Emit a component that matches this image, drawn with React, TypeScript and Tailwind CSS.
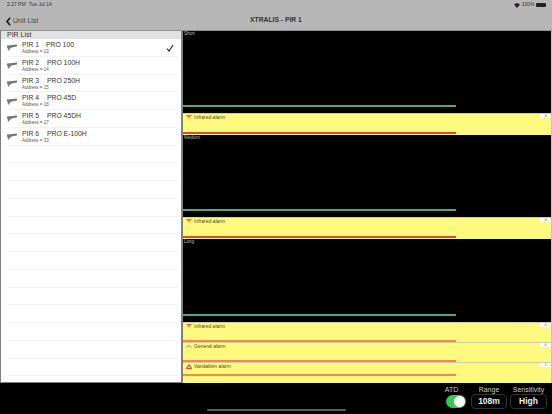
const font = { fontFamily: '"Liberation Sans", Arial, sans-serif' };

function Sensor() {
  return (
    <svg width="10" height="7" viewBox="0 0 10 7" className="shrink-0">
      <path d="M0 1.6 L10 0.6 V2.6 L4.4 3.4 L4 4.4 L2.6 4.6 L2.2 6.4 H0.8 L0.8 3.8 H0 Z" fill="#777" />
    </svg>
  );
}

const pirs = [
  ["PIR 1", "PRO 100", "Address = 13", "w-[24px]"],
  ["PIR 2", "PRO 100H", "Address = 14", "w-[25px]"],
  ["PIR 3", "PRO 250H", "Address = 15", "w-[25px]"],
  ["PIR 4", "PRO 45D", "Address = 16", "w-[25px]"],
  ["PIR 5", "PRO 45DH", "Address = 17", "w-[25px]"],
  ["PIR 6", "PRO E-100H", "Address = 33", "w-[25px]"],
];

function Row({ item, checked }: { item?: string[]; checked?: boolean }) {
  return (
    <div className="h-[17.75px] shrink-0 flex flex-col">
      <div className="flex-1 flex items-center pl-[6px] pr-[6px]">
        {item && (
          <>
            <div className="w-[15px] mt-[1px]"><Sensor /></div>
            <div className="flex-1 flex flex-col mt-[1.5px]">
              <div className="flex text-[6.8px] leading-[8px] text-[#333]">
                <span className={item[3] === "w-[24px]" ? "w-[24px]" : "w-[25px]"}>{item[0]}</span>
                <span>{item[1]}</span>
              </div>
              <div className="text-[4.5px] leading-[6px] text-[#555]">{item[2]}</div>
            </div>
            {checked && (
              <svg width="8" height="8" viewBox="0 0 8 8" className="mr-[1px] mt-[2px]">
                <path d="M1 4.5 L3 7 L7 1" fill="none" stroke="#222" strokeWidth="1.1" />
              </svg>
            )}
          </>
        )}
      </div>
      <div className="h-px ml-[7px] mr-[3px] bg-[#f2f2f2]" />
    </div>
  );
}

function Chart({ label, h }: { label: string; h: string }) {
  return (
    <div className={`${h} bg-black relative`}>
      <div className="text-[4.5px] leading-[6px] text-[#bdbdbd] pl-[1px]">{label}</div>
      <div className="absolute left-0 w-[273px] bottom-[6.5px] h-[1.5px] bg-[#4fa58c]" />
    </div>
  );
}

function Ir() {
  return (
    <svg width="6" height="5" viewBox="0 0 6 5">
      <path d="M0 0 H6 L5 1.5 H4 L3 4.5 L2 1.5 H1 Z" fill="#e9743a" />
    </svg>
  );
}
function Gen() {
  return (
    <svg width="6" height="5" viewBox="0 0 6 5">
      <path d="M0.5 3 Q3 0 5.5 3" fill="none" stroke="#e9843a" strokeWidth="1" />
    </svg>
  );
}
function Van() {
  return (
    <svg width="6" height="5" viewBox="0 0 6 5">
      <path d="M3 0.5 L5.6 4.7 H0.4 Z" fill="none" stroke="#e2503a" strokeWidth="1.2" />
    </svg>
  );
}

function Alarm({ icon, label, val, h, line, color }: { icon: React.ReactNode; label: string; val: string; h: string; line: string; color: string }) {
  return (
    <div className={`${h} bg-[#fdf97e] border-t border-[#cfcda6] relative`}>
      <div className="flex items-center pl-[3px] h-[6px]">
        <div className="w-[8px]">{icon}</div>
        <span className="text-[5px] leading-[6px] text-[#4a4a2a]">{label}</span>
      </div>
      <div className="absolute right-0 top-0 w-[11px] h-[4px] bg-white text-[4px] leading-[4px] text-[#666] text-center">{val}</div>
      <div className={`absolute left-0 w-[273px] ${line} ${color}`} />
    </div>
  );
}

export default function App() {
  return (
    <div className="w-[552px] h-[414px] bg-black flex flex-col overflow-hidden" style={font}>
      <header className="h-[30px] shrink-0 bg-[#b7b7b7] flex flex-col">
        <div className="h-[10px] flex items-center justify-between pl-[7px] pr-[6px] text-[5px] text-[#333]">
          <div className="flex gap-[3px]"><span>2:27 PM</span><span>Tue Jul 14</span></div>
          <div className="flex items-center gap-[1.5px]">
            <svg width="6" height="5" viewBox="0 0 6 5"><path d="M0 1.5 Q3 -1 6 1.5 L3 5 Z" fill="#222" /></svg>
            <span>100%</span>
            <div className="w-[10px] h-[4px] bg-[#222] rounded-[1px]" />
          </div>
        </div>
        <div className="flex-1 relative flex items-center justify-center">
          <div className="absolute left-[6px] top-[6px] flex items-center gap-[2px] text-[7px] text-[#444]">
            <svg width="5" height="9" viewBox="0 0 5 9"><path d="M4.2 0.7 L1 4.5 L4.2 8.3" fill="none" stroke="#222" strokeWidth="1.7" /></svg>
            <span>Unit List</span>
          </div>
          <span className="text-[6.75px] font-bold text-[#333]">XTRALIS - PIR 1</span>
        </div>
      </header>
      <div className="h-[353px] flex shrink-0 border-t border-[#8f8f8f]">
        <aside className="w-[183px] shrink-0 bg-white border-l border-r-2 border-b border-[#808080] flex flex-col overflow-hidden">
          <div className="h-[8px] shrink-0 bg-[#e2e2e2] pl-[6px] text-[7px] leading-[8px] text-[#333]">PIR List</div>
          {pirs.map((p, i) => <Row key={p[0]} item={p} checked={i === 0} />)}
          {Array.from({ length: 13 }).map((_, i) => <Row key={i} />)}
        </aside>
        <main className="flex-1 flex flex-col border-r border-[#c4c4c4]">
          <Chart label="Short" h="h-[82px]" />
          <Alarm icon={<Ir />} label="Infrared alarm" val="0" h="h-[22px]" line="bottom-[1.5px] h-[1.5px]" color="bg-[#d8502a]" />
          <Chart label="Medium" h="h-[82px]" />
          <Alarm icon={<Ir />} label="Infrared alarm" val="0" h="h-[22px]" line="bottom-[1.5px] h-[1.5px]" color="bg-[#d8502a]" />
          <Chart label="Long" h="h-[83px]" />
          <Alarm icon={<Ir />} label="Infrared alarm" val="0" h="h-[20px]" line="bottom-[0.5px] h-[1.5px]" color="bg-[#ee8a4a]" />
          <Alarm icon={<Gen />} label="General alarm" val="0" h="h-[20px]" line="bottom-[0.5px] h-[1.5px]" color="bg-[#ee8a4a]" />
          <Alarm icon={<Van />} label="Vandalism alarm" val="1" h="h-[21px]" line="bottom-[7.5px] h-[1.5px]" color="bg-[#ee8a4a]" />
        </main>
      </div>
      <footer className="flex-1 relative flex justify-end items-start pr-[5px] pt-[3px] gap-[3px] text-[#c9c9c9]">
        <div className="flex flex-col items-center mr-[1px] w-[23px]">
          <span className="text-[7px] leading-[8px] -ml-[8px]">ATD</span>
          <div className="w-[20px] h-[13px] mt-[1px] rounded-full bg-[#3fc45a] relative">
            <div className="absolute right-[0.5px] top-[1px] w-[11px] h-[11px] rounded-full bg-white" />
          </div>
        </div>
        <div className="flex flex-col items-center">
          <span className="text-[7px] leading-[8px]">Range</span>
          <div className="w-[36px] h-[15px] border border-[#333] rounded-[4px] flex items-center justify-center text-[8.5px] font-bold text-[#eee]">108m</div>
        </div>
        <div className="flex flex-col items-center">
          <span className="text-[7px] leading-[8px]">Sensitivity</span>
          <div className="w-[37px] h-[15px] border border-[#333] rounded-[4px] flex items-center justify-center text-[8.5px] font-bold text-[#eee]">High</div>
        </div>
        <div className="absolute left-[207px] bottom-[3px] w-[139px] h-[2px] rounded-full bg-[#5c5c5c]" />
      </footer>
    </div>
  );
}
